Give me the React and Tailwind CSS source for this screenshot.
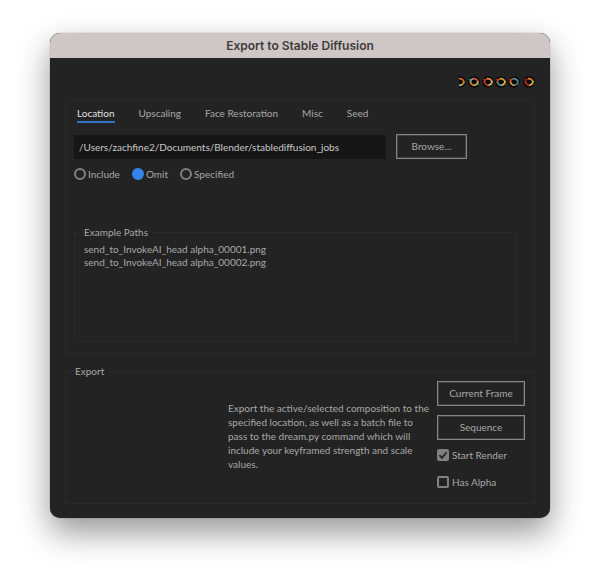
import { useState } from "react";

const tabs = ["Location", "Upscaling", "Face Restoration", "Misc", "Seed"];
const modes = ["Include", "Omit", "Specified"];
const examplePaths = [
  "send_to_InvokeAI_head alpha_00001.png",
  "send_to_InvokeAI_head alpha_00002.png",
];

// Each orb: centre, then the colours of its upper left, upper right, lower right and lower left arcs.
const orbs = [
  { x: 1, c: ["#3a0d08", "#d8602c", "#d8a83c", "#54b8a8"] },
  { x: 15, c: ["#58b4a4", "#d8502c", "#c8c04c", "#d88430"] },
  { x: 29, c: ["#b8382c", "#d8903c", "#d8c880", "#a04028"] },
  { x: 42, c: ["#c8442c", "#c8a040", "#d8c870", "#489088"] },
  { x: 55, c: ["#c8482c", "#4890a0", "#347c88", "#d09040"] },
  { x: 70, c: ["#902818", "#d88038", "#d8c060", "#b03024"] },
];

function OrbStrip() {
  return (
    <svg width="76" height="14" viewBox="0 0 76 14" fill="none" aria-hidden="true">
      {orbs.map(({ x, c }) => (
        <g key={x} transform={`translate(${x} 7)`} strokeWidth="1.7">
          <circle r="5.8" fill="#080505" />
          <path d="M-3.6 1A4 3.4 0 0 1 0-3.3" stroke={c[0]} />
          <path d="M-1-3.3A4.2 3.6 0 0 1 3.9 .4" stroke={c[1]} />
          <path d="M3.9-.6A4.2 3.6 0 0 1-.4 3.3" stroke={c[2]} />
          <path d="M.6 3.3A4.2 3.4 0 0 1-3.4-.6" stroke={c[3]} />
          <path d="M-5-2.6L-3-1.6M3.4 1.8L4.8 2.6" stroke={c[0]} strokeWidth="1" />
        </g>
      ))}
    </svg>
  );
}

function OutlineButton({ children, className = "" }) {
  return (
    <button
      type="button"
      className={`h-[25px] border border-[#868686] pb-[2px] text-center leading-4 shadow-[inset_0_0_0_1px_#404040] hover:border-[#a0a0a0] ${className}`}
    >
      {children}
    </button>
  );
}

function CheckOption({ label, defaultChecked }) {
  return (
    <label className="flex h-4 items-center gap-[3px]">
      <span className="relative flex size-3">
        <input
          type="checkbox"
          defaultChecked={defaultChecked}
          className="peer size-3 appearance-none rounded-xs border-2 border-[#808080] checked:bg-[#808080]"
        />
        <svg
          viewBox="0 0 12 12"
          className="pointer-events-none absolute inset-0 hidden size-3 peer-checked:block"
          fill="none"
          stroke="#232323"
          strokeWidth="1.8"
        >
          <path d="M2.4 6.2L5 8.8L9.6 3.2" />
        </svg>
      </span>
      {label}
    </label>
  );
}

export default function App() {
  const [tab, setTab] = useState("Location");
  const [mode, setMode] = useState("Omit");

  return (
    <div className="min-h-screen bg-white px-[50px] pt-[33px] pb-[66px] font-[Lato,'Open_Sans',sans-serif] text-[10px] leading-4 text-[#a8a8a8]">
      <main className="overflow-hidden rounded-[10px] bg-[#232323] shadow-[0_14px_32px_rgba(0,0,0,0.42),0_0_1px_rgba(0,0,0,0.6)]">
        <header className="flex h-[25px] items-center justify-center bg-[#cfc7c6]">
          <h1 className="font-[Inter,sans-serif] text-[12px] font-semibold text-[#403b3b]">
            Export to Stable Diffusion
          </h1>
        </header>

        <div className="px-[15px] pt-[17px] pb-[14px]">
          <div className="flex justify-end">
            <OrbStrip />
          </div>

          <section className="mt-[11px] border border-[#2a2a2a] pt-1 pb-[11px] pl-2">
            <div role="tablist" className="flex gap-6 pl-[3px]">
              {tabs.map((name) => (
                <button
                  key={name}
                  type="button"
                  role="tab"
                  aria-selected={tab === name}
                  onClick={() => setTab(name)}
                  className={`border-b-2 whitespace-nowrap ${
                    tab === name ? "border-[#2f76cf] text-[#e0e0e0]" : "border-transparent"
                  }`}
                >
                  {name}
                </button>
              ))}
            </div>

            <div className="mt-[11px] flex items-center gap-[10px] pr-[67px]">
              <input
                type="text"
                aria-label="Export location"
                defaultValue="/Users/zachfine2/Documents/Blender/stablediffusion_jobs"
                className="h-6 min-w-0 flex-1 bg-[#161616] px-[5px] text-[#c8c8c8] outline-none"
              />
              <OutlineButton className="w-[71px]">Browse...</OutlineButton>
            </div>

            <div className="mt-[7px] mb-[42px] flex gap-3">
              {modes.map((name) => (
                <label key={name} className="flex items-center gap-[2px]">
                  <input
                    type="radio"
                    name="mode"
                    checked={mode === name}
                    onChange={() => setMode(name)}
                    className="size-3 appearance-none rounded-full border-2 border-[#808080] checked:border-[#3286ea] checked:bg-[#3286ea]"
                  />
                  {name}
                </label>
              ))}
            </div>

            <fieldset className="mr-[18px] h-[118px] border border-[#2a2a2a] pt-[3px] pl-[9px]">
              <legend className="pr-1">Example Paths</legend>
              {examplePaths.map((path) => (
                <p key={path} className="leading-[13px]">
                  {path}
                </p>
              ))}
            </fieldset>
          </section>

          <fieldset className="mt-[9px] border border-[#2a2a2a] pt-[2px] pr-[9px] pb-[13px] pl-[9px]">
            <legend className="pr-1">Export</legend>
            <div className="flex items-center justify-end gap-[7px]">
              <p className="w-[202px] leading-[14px]">
                Export the active/selected composition to the specified location, as well as a
                batch file to pass to the dream.py command which will include your keyframed
                strength and scale values.
              </p>
              <div className="flex w-[88px] flex-col">
                <OutlineButton>Current Frame</OutlineButton>
                <OutlineButton className="mt-[9px]">Sequence</OutlineButton>
                <div className="mt-[7px] flex flex-col gap-[11px]">
                  <CheckOption label="Start Render" defaultChecked />
                  <CheckOption label="Has Alpha" />
                </div>
              </div>
            </div>
          </fieldset>
        </div>
      </main>
    </div>
  );
}
